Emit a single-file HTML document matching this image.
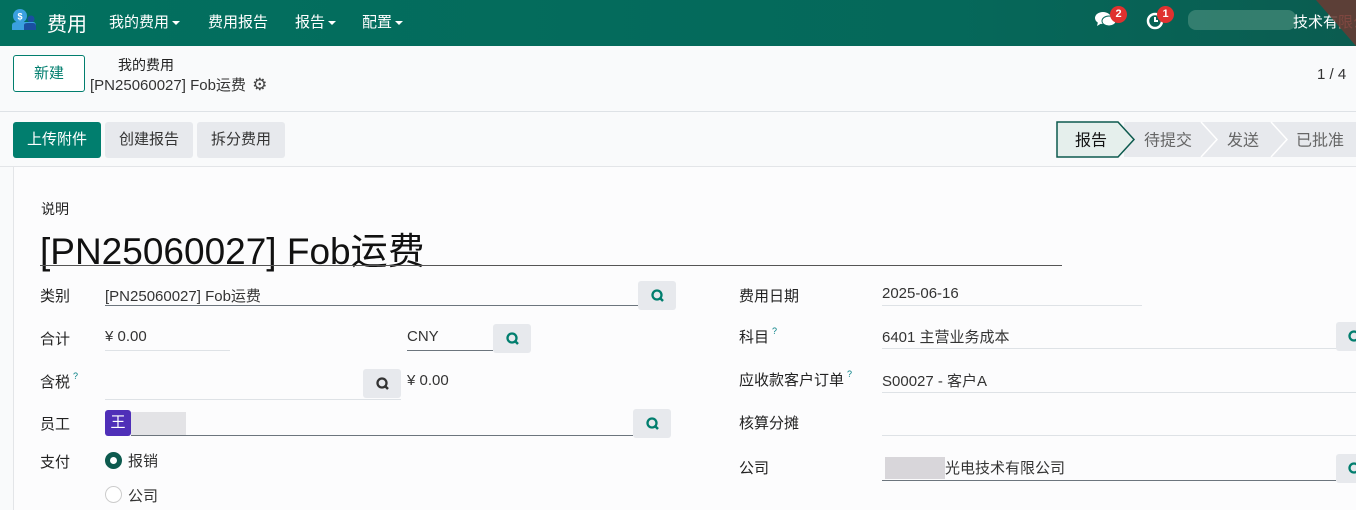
<!DOCTYPE html>
<html><head><meta charset="utf-8"><style>
*{box-sizing:border-box;margin:0;padding:0}
body{width:1356px;height:510px;overflow:hidden;background:#f9fafb;font-family:"Liberation Sans","Noto Sans CJK SC",sans-serif;font-size:15px;color:#333;position:relative}
.a{position:absolute;white-space:nowrap}
.nav{position:absolute;left:0;top:0;width:1356px;height:46px;background:linear-gradient(90deg,#02705f,#05685a 70%,#0b5c50);overflow:hidden}
.nav .a{color:#fff;font-size:15px}
.caret{display:inline-block;border-left:4px solid transparent;border-right:4px solid transparent;border-top:4px solid #fff;vertical-align:middle;margin-left:3px}
.btn{position:absolute;height:36px;line-height:36px;text-align:center;border-radius:3px;font-size:15px}
.sb{position:absolute;width:38px;height:29px;background:#e7e9ed;border-radius:3px}
.ul{position:absolute;height:1px;background:#6c757d}
.ul2{position:absolute;height:1px;background:#dee2e6}
.lbl{position:absolute;font-size:15px;color:#222}
.q{font-size:9px;color:#017e84;vertical-align:top;margin-left:3px}
.badge{position:absolute;width:17px;height:17px;border-radius:50%;background:#e0312f;color:#fff;font-size:11px;font-weight:bold;text-align:center;line-height:17px}
</style></head><body>
<div class="nav">
 <svg class="a" style="left:11px;top:8px" width="26" height="24" viewBox="0 0 26 24"><circle cx="9" cy="8" r="7" fill="#3aa0e0"/><text x="9" y="11.5" font-size="9" fill="#fff" text-anchor="middle" font-family="Liberation Sans" font-weight="bold">$</text><circle cx="20" cy="11" r="3.5" fill="#1a4fa0"/><path d="M1 17 Q1 14 6 14 L22 14 Q25 14 25 18 L25 22 L1 22Z" fill="#3aa0e0"/><path d="M13 22 L13 17 Q13 15 17 15 L22 15 Q25 15 25 18 L25 22Z" fill="#1a4fa0"/></svg>
 <div class="a" style="left:47px;top:8px;font-size:20px">费用</div>
 <div class="a" style="left:109px;top:11px">我的费用<span class="caret"></span></div>
 <div class="a" style="left:208px;top:11px">费用报告</div>
 <div class="a" style="left:295px;top:11px">报告<span class="caret"></span></div>
 <div class="a" style="left:362px;top:11px">配置<span class="caret"></span></div>
 <svg class="a" style="left:1095px;top:11px" width="22" height="18" viewBox="0 0 22 18"><ellipse cx="8" cy="7" rx="8" ry="6" fill="#fff"/><path d="M3 11 L2 15 L7 12Z" fill="#fff"/><ellipse cx="14" cy="10" rx="7" ry="5" fill="#fff" stroke="#05685a" stroke-width="1"/></svg>
 <div class="badge" style="left:1110px;top:6px">2</div>
 <svg class="a" style="left:1146px;top:11px" width="20" height="20" viewBox="0 0 20 20"><circle cx="9" cy="10" r="7" fill="none" stroke="#fff" stroke-width="2.5"/><path d="M9 6 V10 H12" stroke="#fff" stroke-width="2" fill="none"/></svg>
 <div class="badge" style="left:1157px;top:6px">1</div>
 <div class="a" style="left:1188px;top:10px;width:108px;height:20px;background:#3f8676;border-radius:8px;opacity:.8"></div>
 <div class="a" style="left:1293px;top:11px">技术有<span style="color:#e6958a">限公</span></div>
 <svg class="a" style="left:1316px;top:0" width="40" height="46"><path d="M0 0 H40 V46Z" fill="#6b3a32" opacity=".85"/></svg>
</div>
<div class="btn" style="left:13px;top:55px;width:72px;height:37px;border:1px solid #017e6e;color:#017e6e;background:#fff;line-height:35px">新建</div>
<div class="a" style="left:118px;top:55px;font-size:14px;color:#222">我的费用</div>
<div class="a" style="left:90px;top:74px;font-size:15px;color:#333">[PN25060027] Fob运费 <span style="font-size:17px;color:#444;margin-left:2px">⚙</span></div>
<div class="a" style="left:1317px;top:66px;font-size:15px;color:#333">1 / 4</div>
<div class="ul2" style="left:0;top:111px;width:1356px"></div>
<div class="btn" style="left:13px;top:122px;width:88px;background:#017e6e;color:#fff">上传附件</div>
<div class="btn" style="left:105px;top:122px;width:88px;background:#e7e9ed;color:#333">创建报告</div>
<div class="btn" style="left:197px;top:122px;width:88px;background:#e7e9ed;color:#333">拆分费用</div>
<svg class="a" style="left:1056px;top:121px" width="300" height="37" viewBox="0 0 300 37">
 <rect x="68" y="1" width="232" height="35" fill="#e7e9ed"/>
 <path d="M1 1 H62 L78 18.5 L62 36 H1Z" fill="#e5efec" stroke="#0d5a4e" stroke-width="1.5"/>
 <path d="M145 1 L161 18.5 L145 36 M215 1 L231 18.5 L215 36" stroke="#fff" stroke-width="1.5" fill="none"/>
 <text x="19" y="24.5" font-size="16" fill="#111" font-family="Noto Sans CJK SC">报告</text>
 <text x="88" y="24.5" font-size="16" fill="#666" font-family="Noto Sans CJK SC">待提交</text>
 <text x="171" y="24.5" font-size="16" fill="#666" font-family="Noto Sans CJK SC">发送</text>
 <text x="240" y="24.5" font-size="16" fill="#666" font-family="Noto Sans CJK SC">已批准</text>
</svg>
<div class="ul2" style="left:0;top:166px;width:1356px;background:#e3e5e8"></div>
<div class="a" style="left:13px;top:167px;width:1343px;height:343px;background:#fcfcfd;border-left:1px solid #e3e5e8"></div>
<div class="lbl" style="left:41px;top:199px;font-size:14px">说明</div>
<div class="a" style="left:40px;top:221px;font-size:37px;color:#111">[PN25060027] Fob运费</div>
<div class="ul" style="left:40px;top:265px;width:1022px;background:#555"></div>

<div class="lbl" style="left:40px;top:285px">类别</div>
<div class="a" style="left:105px;top:285px">[PN25060027] Fob运费</div>
<div class="ul" style="left:105px;top:305px;width:533px"></div>
<div class="sb" style="left:638px;top:281px"></div>
<div class="lbl" style="left:40px;top:328px">合计</div>
<div class="a" style="left:105px;top:328px">¥ 0.00</div>
<div class="ul2" style="left:105px;top:350px;width:125px"></div>
<div class="a" style="left:407px;top:328px">CNY</div>
<div class="ul" style="left:407px;top:350px;width:86px"></div>
<div class="sb" style="left:493px;top:324px"></div>
<div class="lbl" style="left:40px;top:371px">含税<span class="q">?</span></div>
<div class="ul2" style="left:105px;top:399px;width:296px"></div>
<div class="sb" style="left:363px;top:369px"></div>
<div class="a" style="left:407px;top:372px">¥ 0.00</div>
<div class="lbl" style="left:40px;top:413px">员工</div>
<div class="a" style="left:105px;top:410px;width:26px;height:26px;background:#4f2fb8;border-radius:3px;color:#fff;text-align:center;line-height:26px">王</div>
<div class="a" style="left:131px;top:412px;width:55px;height:24px;background:#e3e3e6"></div>
<div class="ul" style="left:131px;top:435px;width:502px"></div>
<div class="sb" style="left:633px;top:409px"></div>
<div class="lbl" style="left:40px;top:451px">支付</div>
<div class="a" style="left:105px;top:452px;width:17px;height:17px;border-radius:50%;border:5px solid #0d5a4e;background:#fff"></div>
<div class="a" style="left:128px;top:450px">报销</div>
<div class="a" style="left:105px;top:486px;width:17px;height:17px;border-radius:50%;border:1px solid #ccc;background:#fff"></div>
<div class="a" style="left:128px;top:485px">公司</div>

<div class="lbl" style="left:739px;top:285px">费用日期</div>
<div class="a" style="left:882px;top:285px">2025-06-16</div>
<div class="ul2" style="left:882px;top:305px;width:260px"></div>
<div class="lbl" style="left:739px;top:326px">科目<span class="q">?</span></div>
<div class="a" style="left:882px;top:326px">6401 主营业务成本</div>
<div class="ul2" style="left:882px;top:348px;width:474px"></div>
<div class="sb" style="left:1336px;top:322px"></div>
<div class="lbl" style="left:739px;top:369px">应收款客户订单<span class="q">?</span></div>
<div class="a" style="left:882px;top:370px">S00027 - 客户A</div>
<div class="ul2" style="left:882px;top:392px;width:474px"></div>
<div class="lbl" style="left:739px;top:412px">核算分摊</div>
<div class="ul2" style="left:882px;top:435px;width:474px"></div>
<div class="lbl" style="left:739px;top:457px">公司</div>
<div class="a" style="left:885px;top:457px;width:60px;height:22px;background:#d8d6da"></div>
<div class="a" style="left:945px;top:457px">光电技术有限公司</div>
<div class="ul" style="left:882px;top:480px;width:454px"></div>
<div class="sb" style="left:1336px;top:454px"></div>
<svg width="0" height="0" style="position:absolute"><defs><g id="m"><circle cx="7" cy="7" r="4.5" fill="none" stroke-width="2.3"/><path d="M10 10 L13 13" stroke-width="2.5"/></g></defs></svg>
<svg class="a" style="left:650px;top:288px" width="15" height="15"><use href="#m" stroke="#017e6e"/></svg>
<svg class="a" style="left:505px;top:331px" width="15" height="15"><use href="#m" stroke="#017e6e"/></svg>
<svg class="a" style="left:375px;top:376px" width="15" height="15"><use href="#m" stroke="#333"/></svg>
<svg class="a" style="left:645px;top:416px" width="15" height="15"><use href="#m" stroke="#017e6e"/></svg>
<svg class="a" style="left:1347px;top:329px" width="15" height="15"><use href="#m" stroke="#017e6e"/></svg>
<svg class="a" style="left:1347px;top:461px" width="15" height="15"><use href="#m" stroke="#017e6e"/></svg>
</body></html>
